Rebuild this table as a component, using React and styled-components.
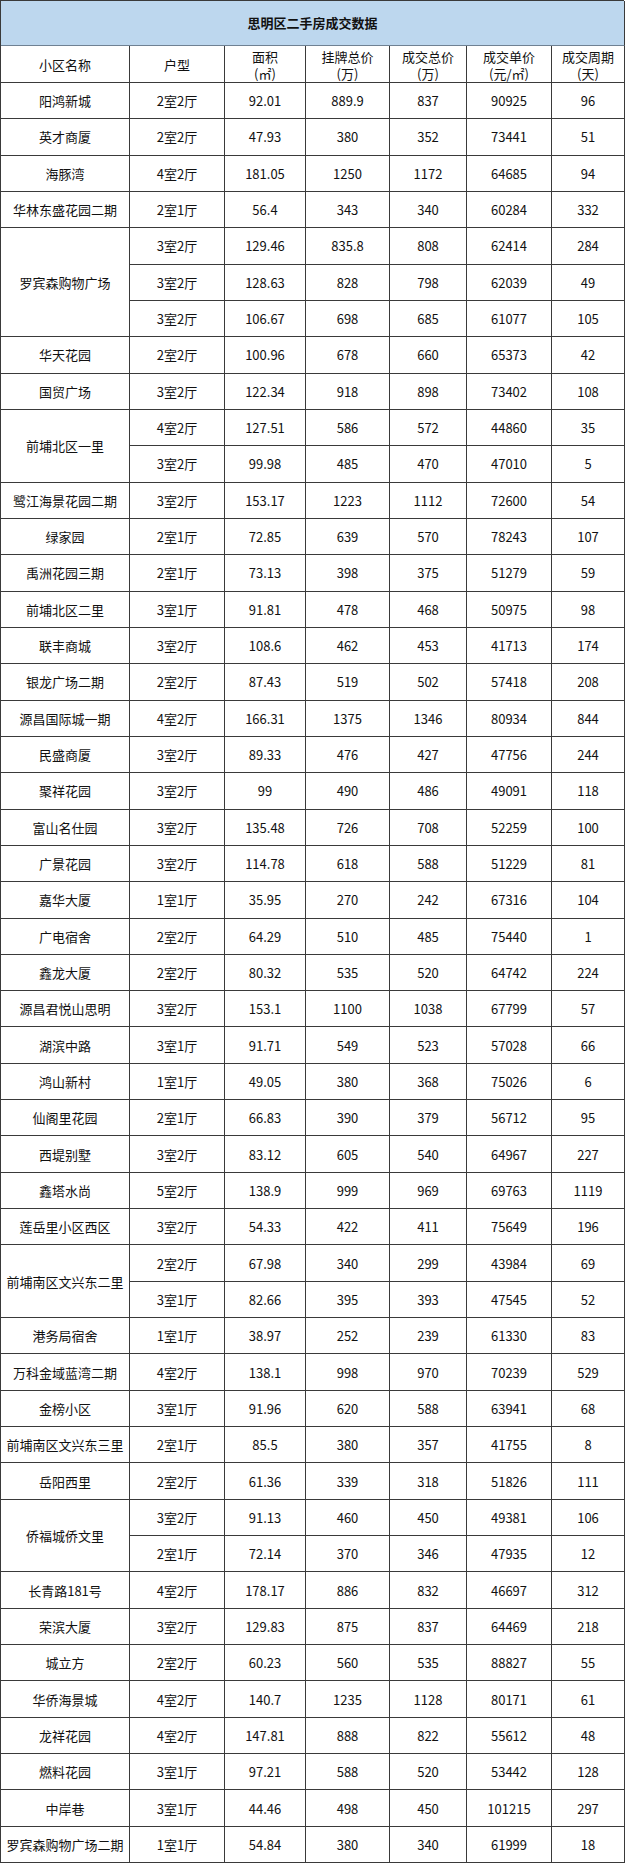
import React from "react";
import styled, { createGlobalStyle } from "styled-components";

const groups = [
  { name: "阳鸿新城", rows: [["2室2厅", "92.01", "889.9", "837", "90925", "96"]] },
  { name: "英才商厦", rows: [["2室2厅", "47.93", "380", "352", "73441", "51"]] },
  { name: "海豚湾", rows: [["4室2厅", "181.05", "1250", "1172", "64685", "94"]] },
  { name: "华林东盛花园二期", rows: [["2室1厅", "56.4", "343", "340", "60284", "332"]] },
  {
    name: "罗宾森购物广场",
    rows: [
      ["3室2厅", "129.46", "835.8", "808", "62414", "284"],
      ["3室2厅", "128.63", "828", "798", "62039", "49"],
      ["3室2厅", "106.67", "698", "685", "61077", "105"],
    ],
  },
  { name: "华天花园", rows: [["2室2厅", "100.96", "678", "660", "65373", "42"]] },
  { name: "国贸广场", rows: [["3室2厅", "122.34", "918", "898", "73402", "108"]] },
  {
    name: "前埔北区一里",
    rows: [
      ["4室2厅", "127.51", "586", "572", "44860", "35"],
      ["3室2厅", "99.98", "485", "470", "47010", "5"],
    ],
  },
  { name: "鹭江海景花园二期", rows: [["3室2厅", "153.17", "1223", "1112", "72600", "54"]] },
  { name: "绿家园", rows: [["2室1厅", "72.85", "639", "570", "78243", "107"]] },
  { name: "禹洲花园三期", rows: [["2室1厅", "73.13", "398", "375", "51279", "59"]] },
  { name: "前埔北区二里", rows: [["3室1厅", "91.81", "478", "468", "50975", "98"]] },
  { name: "联丰商城", rows: [["3室2厅", "108.6", "462", "453", "41713", "174"]] },
  { name: "银龙广场二期", rows: [["2室2厅", "87.43", "519", "502", "57418", "208"]] },
  { name: "源昌国际城一期", rows: [["4室2厅", "166.31", "1375", "1346", "80934", "844"]] },
  { name: "民盛商厦", rows: [["3室2厅", "89.33", "476", "427", "47756", "244"]] },
  { name: "聚祥花园", rows: [["3室2厅", "99", "490", "486", "49091", "118"]] },
  { name: "富山名仕园", rows: [["3室2厅", "135.48", "726", "708", "52259", "100"]] },
  { name: "广景花园", rows: [["3室2厅", "114.78", "618", "588", "51229", "81"]] },
  { name: "嘉华大厦", rows: [["1室1厅", "35.95", "270", "242", "67316", "104"]] },
  { name: "广电宿舍", rows: [["2室2厅", "64.29", "510", "485", "75440", "1"]] },
  { name: "鑫龙大厦", rows: [["2室2厅", "80.32", "535", "520", "64742", "224"]] },
  { name: "源昌君悦山思明", rows: [["3室2厅", "153.1", "1100", "1038", "67799", "57"]] },
  { name: "湖滨中路", rows: [["3室1厅", "91.71", "549", "523", "57028", "66"]] },
  { name: "鸿山新村", rows: [["1室1厅", "49.05", "380", "368", "75026", "6"]] },
  { name: "仙阁里花园", rows: [["2室1厅", "66.83", "390", "379", "56712", "95"]] },
  { name: "西堤别墅", rows: [["3室2厅", "83.12", "605", "540", "64967", "227"]] },
  { name: "鑫塔水尚", rows: [["5室2厅", "138.9", "999", "969", "69763", "1119"]] },
  { name: "莲岳里小区西区", rows: [["3室2厅", "54.33", "422", "411", "75649", "196"]] },
  {
    name: "前埔南区文兴东二里",
    rows: [
      ["2室2厅", "67.98", "340", "299", "43984", "69"],
      ["3室1厅", "82.66", "395", "393", "47545", "52"],
    ],
  },
  { name: "港务局宿舍", rows: [["1室1厅", "38.97", "252", "239", "61330", "83"]] },
  { name: "万科金域蓝湾二期", rows: [["4室2厅", "138.1", "998", "970", "70239", "529"]] },
  { name: "金榜小区", rows: [["3室1厅", "91.96", "620", "588", "63941", "68"]] },
  { name: "前埔南区文兴东三里", rows: [["2室1厅", "85.5", "380", "357", "41755", "8"]] },
  { name: "岳阳西里", rows: [["2室2厅", "61.36", "339", "318", "51826", "111"]] },
  {
    name: "侨福城侨文里",
    rows: [
      ["3室2厅", "91.13", "460", "450", "49381", "106"],
      ["2室1厅", "72.14", "370", "346", "47935", "12"],
    ],
  },
  { name: "长青路181号", rows: [["4室2厅", "178.17", "886", "832", "46697", "312"]] },
  { name: "荣滨大厦", rows: [["3室2厅", "129.83", "875", "837", "64469", "218"]] },
  { name: "城立方", rows: [["2室2厅", "60.23", "560", "535", "88827", "55"]] },
  { name: "华侨海景城", rows: [["4室2厅", "140.7", "1235", "1128", "80171", "61"]] },
  { name: "龙祥花园", rows: [["4室2厅", "147.81", "888", "822", "55612", "48"]] },
  { name: "燃料花园", rows: [["3室1厅", "97.21", "588", "520", "53442", "128"]] },
  { name: "中岸巷", rows: [["3室1厅", "44.46", "498", "450", "101215", "297"]] },
  { name: "罗宾森购物广场二期", rows: [["1室1厅", "54.84", "380", "340", "61999", "18"]] },
];

const headers = [
  ["小区名称"],
  ["户型"],
  ["面积", "(㎡)"],
  ["挂牌总价", "(万)"],
  ["成交总价", "(万)"],
  ["成交单价", "(元/㎡)"],
  ["成交周期", "(天)"],
];

const rowCount = groups.reduce((n, g) => n + g.rows.length, 0);

const GlobalStyle = createGlobalStyle`
  html, body {
    margin: 0;
    padding: 0;
    background: #ffffff;
  }
  body {
    font-family: "Noto Sans CJK SC", "Noto Sans", sans-serif;
    color: #111111;
  }
`;

const Sheet = styled.div`
  width: 624px;
  height: 1863px;
  box-sizing: border-box;
  display: grid;
  grid-template-columns: 129px 95px 81px 84px 77px 85px 73px;
  grid-template-rows: 45px 37px repeat(${(p) => p.$rows}, 1fr);
  border-top: 1px solid #3a3a3a;
  border-left: 1px solid #3a3a3a;
  font-size: 13px;
`;

const Cell = styled.div`
  display: flex;
  flex-direction: column;
  align-items: center;
  justify-content: center;
  text-align: center;
  line-height: 17px;
  white-space: nowrap;
  border-right: 1px solid #3a3a3a;
  border-bottom: 1px solid #3a3a3a;
  background: #ffffff;
  grid-row: ${(p) => (p.$span ? `span ${p.$span}` : "auto")};
`;

const Title = styled(Cell)`
  grid-column: 1 / -1;
  background: #bdd7ee;
  font-weight: 700;
  border-bottom-color: #6f8193;
  padding-bottom: 1px;
`;

const HeadCell = styled(Cell)`
  padding-top: 1px;
`;

const App = () => (
  <>
    <GlobalStyle />
    <Sheet $rows={rowCount}>
      <Title>思明区二手房成交数据</Title>
      {headers.map((lines) => (
        <HeadCell key={lines[0]}>
          {lines.map((l) => (
            <span key={l}>{l}</span>
          ))}
        </HeadCell>
      ))}
      {groups.map((g) =>
        g.rows.map((r, i) => (
          <React.Fragment key={g.name + i}>
            {i === 0 && <Cell $span={g.rows.length}>{g.name}</Cell>}
            {r.map((v, j) => (
              <Cell key={j}>{v}</Cell>
            ))}
          </React.Fragment>
        ))
      )}
    </Sheet>
  </>
);

export default App;
